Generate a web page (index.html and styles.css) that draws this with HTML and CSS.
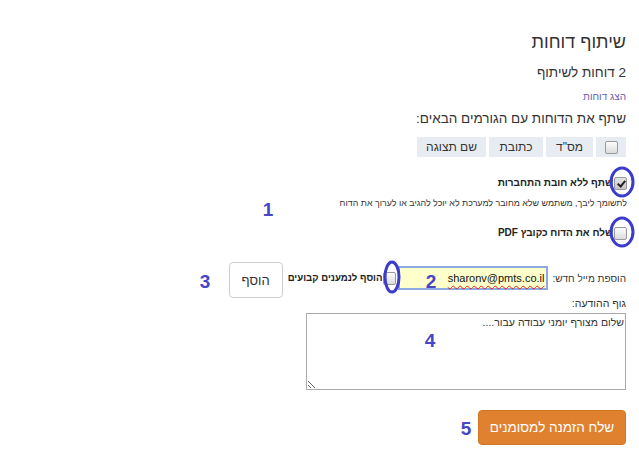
FILE: index.html
```html
<!DOCTYPE html>
<html lang="he" dir="rtl">
<head>
<meta charset="utf-8">
<title>שיתוף דוחות</title>
<link rel="stylesheet" href="styles.css">
</head>
<body>
<div class="page">
  <h1 class="title">שיתוף דוחות</h1>
  <div class="subtitle">2 דוחות לשיתוף</div>
  <a class="link" href="#">הצג דוחות</a>
  <div class="share">שתף את הדוחות עם הגורמים הבאים:</div>
  <div class="thead">
    <div class="th th-check"><span class="cb"></span></div>
    <div class="th th-num">מס"ד</div>
    <div class="th th-addr">כתובת</div>
    <div class="th th-name">שם תצוגה</div>
  </div>
  <label class="opt opt1"><span class="cb checked"></span><b>שתף ללא חובת התחברות</b></label>
  <div class="desc">לתשומך ליבך, משתמש שלא מחובר למערכת לא יוכל להגיב או לערוך את הדוח</div>
  <label class="opt opt2"><span class="cb"></span><b>שלח את הדוח כקובץ PDF</b></label>
  <div class="email-row">
    <span class="email-label">הוספת מייל חדש:</span>
    <div class="email-input">sharonv@pmts.co.il</div>
    <label class="opt inline"><span class="cb"></span><b>הוסף לנמענים קבועים</b></label>
    <button class="add-btn">הוסף</button>
  </div>
  <div class="msg-label">גוף ההודעה:</div>
  <textarea class="msg">שלום מצורף יומני עבודה עבור....</textarea>
  <button class="send-btn">שלח הזמנה למסומנים</button>
</div>
<svg class="marks" width="639" height="467" viewBox="0 0 639 467">
  <ellipse cx="622" cy="182" rx="11" ry="14" />
  <ellipse cx="622" cy="232" rx="11" ry="14" />
  <ellipse cx="392" cy="277" rx="7" ry="15" />
  <text x="268" y="216">1</text>
  <text x="431" y="288">2</text>
  <text x="205" y="288">3</text>
  <text x="430" y="347">4</text>
  <text x="466" y="435">5</text>
</svg>
</body>
</html>
```
FILE: styles.css
```css
html, body {
  margin: 0;
  padding: 0;
  background: #fff;
}
body {
  width: 639px;
  height: 467px;
  position: relative;
  overflow: hidden;
  font-family: "Liberation Sans", Arial, sans-serif;
  color: #333;
}
.page {
  direction: rtl;
  display: flex;
  flex-direction: column;
  align-items: flex-start;
  padding: 30px 13px 0 0;
}
.title {
  font-size: 18px;
  font-weight: normal;
  line-height: 24px;
  margin: 0;
  color: #333;
}
.subtitle {
  font-size: 13.5px;
  line-height: 18px;
  margin-top: 10px;
}
.link {
  font-size: 10px;
  line-height: 14px;
  margin-top: 8px;
  color: #6a5cb0;
  text-decoration: none;
}
.share {
  font-size: 13.5px;
  line-height: 18px;
  margin-top: 6px;
}
.thead {
  display: flex;
  gap: 3px;
  margin-top: 9px;
  height: 20px;
}
.th {
  background: #e7ecf3;
  font-size: 12px;
  display: flex;
  align-items: center;
  justify-content: center;
  color: #333;
}
.th-check { width: 30px; }
.th-num { width: 47px; }
.th-addr { width: 54px; }
.th-name { width: 69px; }
.cb {
  display: inline-block;
  width: 11px;
  height: 11px;
  border: 1px solid #999;
  border-radius: 2px;
  background: linear-gradient(#fcfcfc, #dcdcdc);
  box-sizing: content-box;
  position: relative;
  flex: none;
}
.cb.checked {
  background: linear-gradient(#e4e4e4, #c8c8c8);
}
.cb.checked::after {
  content: "";
  position: absolute;
  left: 4px;
  top: 1px;
  width: 3px;
  height: 6px;
  border: solid #222;
  border-width: 0 2px 2px 0;
  transform: rotate(40deg);
}
.opt {
  display: flex;
  align-items: center;
  gap: 1px;
  font-size: 10px;
  line-height: 14px;
  margin-right: -1px;
}
.opt b { font-weight: bold; color: #222; }
.opt1 { margin-top: 19px; }
.opt2 { margin-top: 17px; }
.desc {
  font-size: 8.9px;
  line-height: 12px;
  margin-top: 7px;
  margin-right: -1px;
  color: #333;
}
.email-row {
  display: flex;
  align-items: center;
  height: 24px;
  margin-top: 26px;
}
.email-label {
  font-size: 10px;
  margin-left: 4px;
}
.email-input {
  width: 144px;
  height: 20px;
  border: 2px solid #8ea8e2;
  background: #ffffcc;
  font-size: 11px;
  line-height: 20px;
  padding: 0 2px 0 0;
  direction: ltr;
  text-align: right;
  text-decoration: underline wavy #d22;
  text-underline-offset: 3px;
  text-decoration-thickness: 1px;
  color: #111;
}
.email-row .inline {
  margin-right: 2px;
  font-size: 9.6px;
}
.add-btn {
  margin-right: 5px;
  margin-top: 4px;
  width: 54px;
  height: 36px;
  background: #fff;
  border: 1px solid #ccc;
  border-radius: 4px;
  font-family: "Liberation Sans", Arial, sans-serif;
  font-size: 13px;
  color: #333;
  padding: 0;
}
.msg-label {
  font-size: 10.5px;
  line-height: 14px;
  margin-top: 6px;
}
.msg {
  margin-top: 3px;
  width: 320px;
  height: 77px;
  box-sizing: border-box;
  border: 1px solid #aaa;
  font-family: "Liberation Sans", Arial, sans-serif;
  font-size: 10.5px;
  padding: 2px 1px;
  color: #333;
  direction: rtl;
}
.send-btn {
  margin-top: 20px;
  width: 148px;
  height: 35px;
  background: #e0812f;
  border: 1px solid #d27522;
  border-radius: 4px;
  color: #fff;
  font-family: "Liberation Sans", Arial, sans-serif;
  font-size: 13.5px;
  padding: 0;
}
.marks {
  position: absolute;
  left: 0;
  top: 0;
  pointer-events: none;
}
.marks ellipse {
  fill: none;
  stroke: #3b3bcc;
  stroke-width: 3;
}
.marks text {
  font-family: "Liberation Sans", Arial, sans-serif;
  font-weight: bold;
  font-size: 19px;
  fill: #4646c6;
  text-anchor: middle;
}
```
